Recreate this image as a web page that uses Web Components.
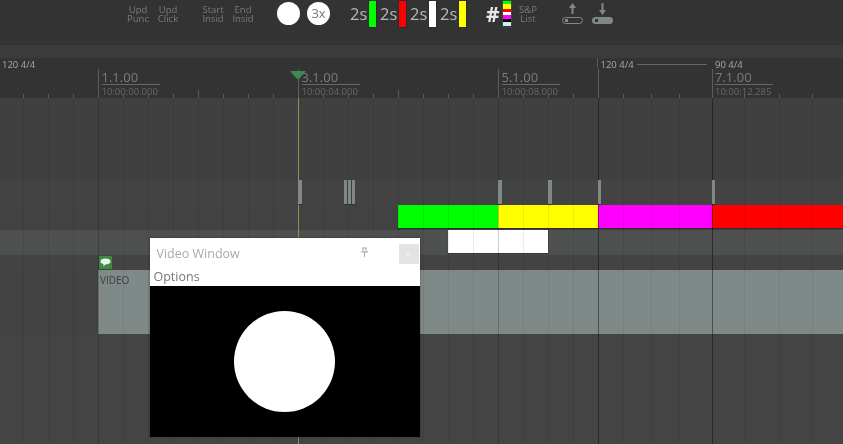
<!DOCTYPE html>
<html>
<head>
<meta charset="utf-8">
<title>Timeline</title>
<style>
  html, body { margin: 0; height: 100%; background: #333; overflow: hidden; }
  body { font-family: "Open Sans", "Noto Sans", sans-serif; }
</style>
</head>
<body>
<sync-app></sync-app>
<script>
// strong = bar line, tempo = tempo change, the rest are beats
const BEATS = [23.5, 48.5, 73.5, 98.5, 123.5, 148.5, 173.5, 198.5, 223.5, 248.5, 273.5, 298.5, 323.5, 348.5, 373.5, 398.5,
  423.5, 448.5, 473.5, 498.5, 523, 548, 573, 598, 623, 651, 679.5, 712, 744.5, 779, 812];
const STRONG = [98.5, 298.5, 498.5, 598, 712];
const TEMPO = [598, 712];

class TwoLabel extends HTMLElement {
  constructor() {
    super();
    this.attachShadow({ mode: 'open' });
    this.shadowRoot.innerHTML = `
      <style>
        :host { display: block; width: 30px; text-align: center; font-size: 9.5px; color: #7a7a7a; white-space: nowrap; }
        div { height: 8.5px; line-height: 8.5px; }
      </style>
      <div>${this.getAttribute('top')}</div>
      <div>${this.getAttribute('bottom')}</div>`;
  }
}
customElements.define('two-label', TwoLabel);

class TimeSwatch extends HTMLElement {
  constructor() {
    super();
    this.attachShadow({ mode: 'open' });
    const color = this.getAttribute('color');
    this.shadowRoot.innerHTML = `
      <style>
        :host { display: flex; align-items: center; height: 26px; }
        span { font-size: 16.5px; color: #b8b8b8; width: 19px; line-height: 26px; }
        i { display: block; width: 7px; height: 26px; background: ${color}; box-shadow: 0 0 0 .5px rgba(0,0,0,.3); }
      </style>
      <span>2s</span><i></i>`;
  }
}
customElements.define('time-swatch', TimeSwatch);

class TopToolbar extends HTMLElement {
  constructor() {
    super();
    this.attachShadow({ mode: 'open' });
    const stack = [['#00ff00', 3], ['#ffff00', 5], ['#ff0000', 3], ['#ffffff', 3], ['#ff00ff', 4], ['#000000', 3], ['#c6f4f6', 4]]
      .map(([c, h]) => `<i style="background:${c};height:${h}px"></i>`).join('');
    this.shadowRoot.innerHTML = `
      <style>
        :host { display: flex; align-items: flex-start; height: 45px; box-sizing: border-box; padding: 1px 0 0 123px; background: #333; }
        .labels { display: flex; margin-top: 5px; }
        .punch { margin-right: 15px; }
        .insert { margin-right: 19px; }
        .dot { width: 23px; height: 23px; border-radius: 50%; background: #fff; margin: 1px 7px 0 0; color: #777; font-size: 13px; line-height: 23px; text-align: center; }
        .swatches { display: flex; gap: 4px; margin-left: 13px; }
        .hash { font-size: 21px; font-weight: 700; color: #e8e8e8; margin-left: 20px; line-height: 27px; width: 17px; }
        .stack { display: flex; flex-direction: column; width: 8px; height: 26px; box-shadow: 0 0 0 .5px rgba(255,255,255,.15); }
        .stack i { display: block; }
        .list { margin: 5px 0 0 2px; }
        .load { display: flex; gap: 7px; margin: 0 0 0 18px; }
        svg { display: block; }
      </style>
      <div class="labels punch"><two-label top="Upd" bottom="Punc"></two-label><two-label top="Upd" bottom="Click"></two-label></div>
      <div class="labels insert"><two-label top="Start" bottom="Insid"></two-label><two-label top="End" bottom="Insid"></two-label></div>
      <div class="dot"></div>
      <div class="dot">3x</div>
      <div class="swatches">
        <time-swatch color="#00ff00"></time-swatch>
        <time-swatch color="#ff0000"></time-swatch>
        <time-swatch color="#ffffff"></time-swatch>
        <time-swatch color="#ffff00"></time-swatch>
      </div>
      <div class="hash">#</div>
      <div class="stack">${stack}</div>
      <two-label class="list" top="S&amp;P" bottom="List"></two-label>
      <div class="load">
        <svg width="23" height="24" viewBox="0 0 23 24">
          <path d="M11.5 2 L15 7 H12.5 V13 H10.5 V7 H8 Z" fill="#7f8988"/>
          <rect x="1.5" y="16.5" width="20" height="6" rx="3" fill="none" stroke="#7f8988"/>
          <rect x="4" y="18" width="3" height="3" fill="#7f8988"/>
        </svg>
        <svg width="23" height="24" viewBox="0 0 23 24">
          <path d="M11.5 14 L15 9 H12.5 V2 H10.5 V9 H8 Z" fill="#7f8988"/>
          <rect x="1" y="16" width="21" height="7" rx="3.5" fill="#7f8988"/>
          <rect x="4" y="18" width="3" height="3" fill="#333"/>
        </svg>
      </div>`;
  }
}
customElements.define('top-toolbar', TopToolbar);

class TimeRuler extends HTMLElement {
  constructor() {
    super();
    this.attachShadow({ mode: 'open' });
    const marks = [[98.5, '1.1.00', '10:00:00.000'], [298.5, '3.1.00', '10:00:04.000'], [498.5, '5.1.00', '10:00:08.000'], [712, '7.1.00', '10:00:12.285']]
      .map(([x, bar, time]) => `
        <div class="mark" style="left:${x + 3}px"><div class="bar">${bar}</div><div class="time">${time}</div></div>`).join('');
    const ticks = BEATS.map(x => {
      const h = STRONG.includes(x) ? 29 : (x === 198.5 || x === 398.5) ? 8 : 4;
      return `<i class="tick" style="left:${Math.floor(x)}px;height:${h}px"></i>`;
    }).join('');
    this.shadowRoot.innerHTML = `
      <style>
        :host { display: block; position: relative; height: 53px; background: #333; }
        .band { height: 13px; background: #3b3b3b; }
        .tempo { position: absolute; top: 13px; font-size: 9.5px; line-height: 13px; color: #a8a8a8; white-space: nowrap; }
        .mark { position: absolute; top: 25px; width: 58px; }
        .bar { font-size: 13px; line-height: 14px; color: #7c7c7c; border-bottom: 1px solid #666; height: 14px; }
        .time { font-size: 9.5px; line-height: 13px; color: #696969; white-space: nowrap; }
        .tick { position: absolute; bottom: 0; width: 1px; background: #5c5c5c; }
        .tline { position: absolute; top: 19px; left: 637px; width: 70px; height: 1px; background: #666; }
        .tstep { position: absolute; top: 13px; left: 597px; width: 1px; height: 10px; background: #5c5c5c; }
      </style>
      <div class="band"></div>
      <div class="tempo" style="left:600.5px">120 4/4</div>
      <div class="tempo" style="left:2px">120 4/4</div>
      <div class="tempo" style="left:715px">90 4/4</div>
      <div class="tline"></div>
      <div class="tstep"></div>
      ${marks}${ticks}`;
  }
}
customElements.define('time-ruler', TimeRuler);

class TrackRow extends HTMLElement {
  constructor() {
    super();
    this.attachShadow({ mode: 'open' });
    const h = this.getAttribute('h');
    const bg = this.getAttribute('bg') || '#424242';
    const flex = h ? `height:${h}px` : 'flex:1';
    this.shadowRoot.innerHTML = `
      <style>
        :host { display: block; position: relative; ${flex}; background: ${bg}; }
      </style>
      <slot></slot>`;
  }
}
customElements.define('track-row', TrackRow);

// a clip sits on the time axis: from/to are its place on the timeline
class TrackClip extends HTMLElement {
  constructor() {
    super();
    this.attachShadow({ mode: 'open' });
    const from = +this.getAttribute('from');
    const to = +this.getAttribute('to');
    const h = this.getAttribute('h') || 23;
    this.shadowRoot.innerHTML = `
      <style>
        :host { position: absolute; top: 0; left: ${from}px; width: ${to - from}px; height: ${h}px; background: ${this.getAttribute('color')}; box-shadow: 0 1px 1px rgba(0,0,0,.3); }
      </style>
      <slot></slot>`;
  }
}
customElements.define('track-clip', TrackClip);

class GridLines extends HTMLElement {
  constructor() {
    super();
    this.attachShadow({ mode: 'open' });
    const lines = BEATS.map(x => {
      const a = TEMPO.includes(x) ? .42 : STRONG.includes(x) ? .2 : .07;
      return `<i style="left:${Math.floor(x)}px;background:rgba(0,0,0,${a})"></i>`;
    }).join('');
    this.shadowRoot.innerHTML = `
      <style>
        :host { position: absolute; inset: 0; pointer-events: none; }
        i { position: absolute; top: 0; bottom: 0; width: 1px; }
      </style>
      ${lines}`;
  }
}
customElements.define('grid-lines', GridLines);

class PlayHead extends HTMLElement {
  constructor() {
    super();
    this.attachShadow({ mode: 'open' });
    this.shadowRoot.innerHTML = `
      <style>
        :host { position: absolute; left: 289px; top: 71px; width: 18px; bottom: 0; pointer-events: none; }
        svg { display: block; position: absolute; top: 0; left: 0; }
        i { position: absolute; left: 9px; width: 1px; }
        .head { top: 8px; height: 19px; background: #4f6a50; }
        .line { top: 27px; bottom: 0; background: #8f9150; }
      </style>
      <i class="head"></i><i class="line"></i>
      <svg width="18" height="9" viewBox="0 0 18 9"><path d="M1 0 H17 L10 8 H8 Z" fill="#3c8a4f"/></svg>`;
  }
}
customElements.define('play-head', PlayHead);

class VideoWindow extends HTMLElement {
  constructor() {
    super();
    this.attachShadow({ mode: 'open' });
    this.shadowRoot.innerHTML = `
      <style>
        :host { position: absolute; left: 149.5px; top: 238px; width: 270px; height: 199px; display: flex; flex-direction: column; background: #fff; box-shadow: 0 0 2px rgba(0,0,0,.4); }
        .title { display: flex; align-items: center; height: 30px; box-sizing: border-box; padding: 0 1px 0 7px; font-size: 12.5px; color: #a9a9a9; }
        .title span { flex: 1; }
        .pin { margin-right: 30px; margin-top: -3px; display: block; }
        .close { width: 20px; height: 20px; margin-top: 2px; background: #e3e3e3; color: #f2f2f2; font-size: 11px; line-height: 20px; text-align: center; }
        .options { height: 18px; padding-left: 4px; font-size: 12.5px; line-height: 18px; color: #777; }
        .video { flex: 1; background: #000; display: flex; align-items: center; justify-content: center; }
        .video div { width: 101px; height: 101px; border-radius: 50%; background: #fff; }
      </style>
      <div class="title">
        <span>Video Window</span>
        <svg class="pin" width="9" height="10" viewBox="0 0 9 10"><path d="M2 1 H7 M3 1 V5 M6 1 V5 M1 5 H8 M4.5 5 V10" stroke="#aaa" fill="none"/></svg>
        <div class="close">×</div>
      </div>
      <div class="options">Options</div>
      <div class="video"><div></div></div>`;
  }
}
customElements.define('video-window', VideoWindow);

class SyncApp extends HTMLElement {
  constructor() {
    super();
    this.attachShadow({ mode: 'open' });
    const grips = [[298, 4], [344, 3], [348, 3], [352, 3], [498, 4], [548, 4], [598, 3], [712, 3]]
      .map(([x, w]) => `<track-clip from="${x}" to="${x + w}" h="24" color="#7f8988"></track-clip>`).join('');
    this.shadowRoot.innerHTML = `
      <style>
        :host { display: block; position: relative; width: 843px; height: 444px; overflow: hidden; filter: blur(.5px); }
        .tracks { display: flex; flex-direction: column; height: 346px; background: #434343; }
        .grips { z-index: 2; }
        .note { position: absolute; left: 99px; top: 1px; width: 13px; height: 13px; background: #3c8a43; border-radius: 1px; display: block; }
        .video { padding: 4px 2px; font-size: 10px; line-height: 13px; color: #3c3f3f; }
        play-head { z-index: 1; }
        video-window { z-index: 3; }
      </style>
      <top-toolbar></top-toolbar>
      <time-ruler></time-ruler>
      <div class="tracks">
        <track-row h="82" bg="#404040"></track-row>
        <track-row class="grips" h="25" bg="transparent">${grips}</track-row>
        <track-row h="25">
          <track-clip from="398" to="498" color="#00ff00"></track-clip>
          <track-clip from="498" to="598" color="#ffff00"></track-clip>
          <track-clip from="598" to="712" color="#ff00ff"></track-clip>
          <track-clip from="712" to="843" color="#ff0000"></track-clip>
        </track-row>
        <track-row h="25" bg="#4d504f">
          <track-clip from="448" to="548" color="#ffffff"></track-clip>
        </track-row>
        <track-row h="15" bg="#434343">
          <svg class="note" viewBox="0 0 13 13"><path d="M6.5 2.5 C9.5 2.5 11.5 3.6 11.5 5.4 C11.5 7.2 9.5 8.3 6.8 8.3 L4.2 10.5 L4.6 8.1 C2.9 7.7 1.5 6.8 1.5 5.4 C1.5 3.6 3.5 2.5 6.5 2.5 Z" fill="#eef2ee"/></svg>
        </track-row>
        <track-row h="64">
          <track-clip from="98" to="843" h="64" color="#7f8988"><div class="video">VIDEO</div></track-clip>
        </track-row>
        <track-row bg="#444"></track-row>
      </div>
      <grid-lines style="top:98px"></grid-lines>
      <play-head></play-head>
      <video-window></video-window>`;
  }
}
customElements.define('sync-app', SyncApp);
</script>
</body>
</html>
